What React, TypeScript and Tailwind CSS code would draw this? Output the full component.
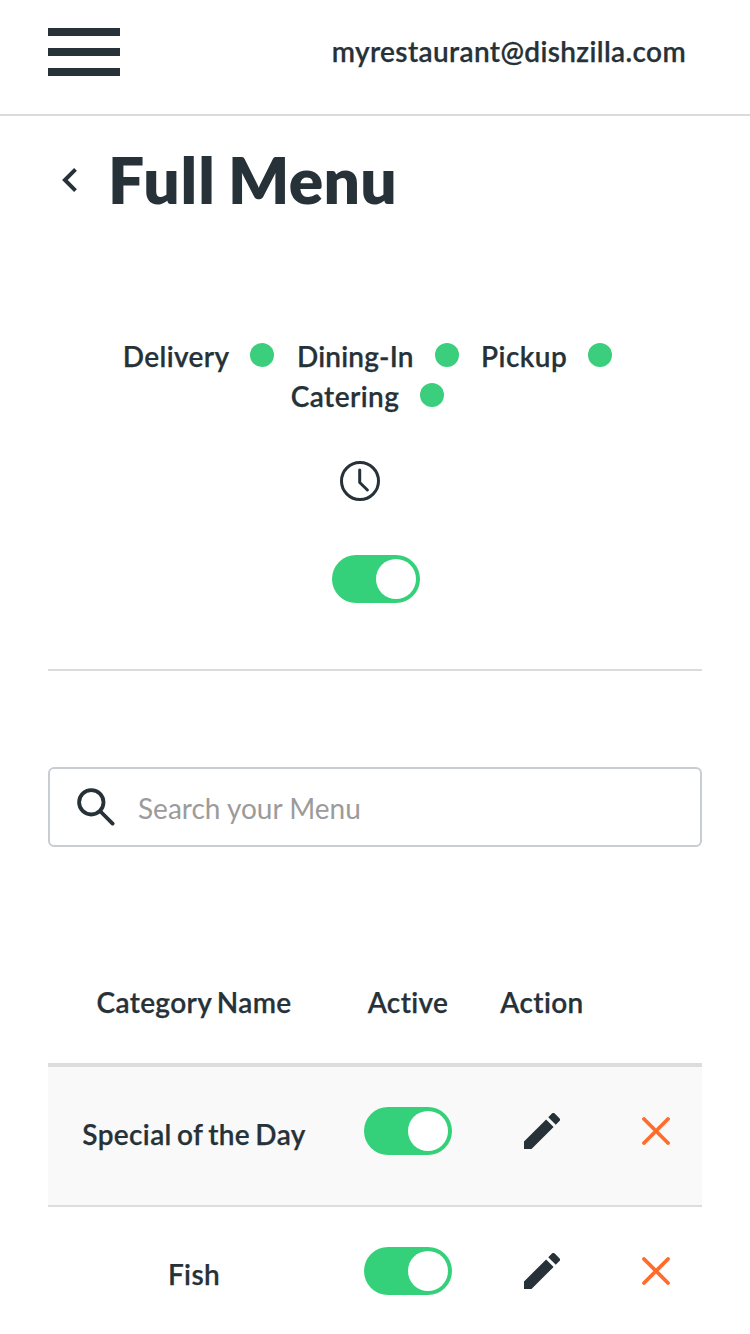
import React from "react";

const services = [
  { name: "Delivery", spacing: "tracking-[0.36px]" },
  { name: "Dining-In", spacing: "tracking-[0.18px]" },
  { name: "Pickup", spacing: "tracking-[0.42px]" },
  { name: "Catering", spacing: "tracking-[0.42px]" },
];
const categories = ["Special of the Day", "Fish"];

function Toggle() {
  return (
    <button
      type="button"
      role="switch"
      aria-checked="true"
      className="flex h-12 w-[88px] items-center justify-end rounded-full bg-[#35d07a] pr-1"
    >
      <span className="size-10 rounded-full bg-white" />
    </button>
  );
}

function PencilIcon() {
  return (
    <svg viewBox="3 3 18 18" className="size-9" fill="currentColor">
      <path d="M3 17.25V21h3.75L17.81 9.94l-3.75-3.75L3 17.25zM20.71 7.04a1 1 0 0 0 0-1.41l-2.34-2.34a1 1 0 0 0-1.41 0l-1.83 1.83 3.75 3.75 1.83-1.83z" />
    </svg>
  );
}

function CloseIcon() {
  return (
    <svg viewBox="0 0 28 28" className="size-7 text-[#ff6c2c]" fill="none" stroke="currentColor" strokeWidth="3.8" strokeLinecap="round">
      <path d="M2 2l24 24M26 2L2 26" />
    </svg>
  );
}

export default function App() {
  return (
    <div className="flex h-[1334px] w-[750px] flex-col overflow-hidden bg-white font-['Lato',sans-serif] text-[28px] leading-10 font-semibold tracking-[0.36px] text-[#263238] [-webkit-text-stroke:0.25px_#263238] [font-variant-ligatures:no-common-ligatures] [word-spacing:-2px]">
      <header className="flex h-[116px] shrink-0 items-start justify-between border-b-2 border-[#dbdbdb] pr-16 pl-12">
        <button type="button" aria-label="Menu" className="mt-7 flex w-[72px] flex-col gap-3">
          <span className="h-2 bg-[#263238]" />
          <span className="h-2 bg-[#263238]" />
          <span className="h-2 bg-[#263238]" />
        </button>
        <span className="mt-[31px]">myrestaurant@dishzilla.com</span>
      </header>

      <main className="flex flex-col px-12">
        <div className="flex h-32 items-center gap-[31px] pl-3.5">
          <svg viewBox="8 6 7.41 12" className="h-6 w-[15px]" fill="currentColor">
            <path d="M15.41 7.41L14 6l-6 6 6 6 1.41-1.41L10.83 12z" />
          </svg>
          <h1 className="-mt-px text-[64px] leading-[80px] font-extrabold tracking-[0.3px] [-webkit-text-stroke:0px] [word-spacing:-3px]">
            <span className="tracking-[1px]">Full</span> Menu
          </h1>
        </div>

        <section className="flex h-[427px] flex-col items-center border-b-2 border-[#dbdbdb] pt-[92px]">
          <div className="flex w-[560px] flex-wrap justify-center gap-x-[22.5px] pr-[15px]">
            {services.map(({ name, spacing }) => (
              <div key={name} className="flex h-10 gap-[21px]">
                <span className={spacing}>{name}</span>
                <span className="mt-[7px] size-6 rounded-full bg-[#3bce7c]" />
              </div>
            ))}
          </div>
          <svg viewBox="0 0 40 40" className="mt-[45px] mr-[30px] size-10" fill="none" stroke="currentColor" strokeWidth="3">
            <circle cx="20" cy="20" r="18.5" />
            <path d="M19.7 9v12.5l7.7 7.5" strokeLinecap="round" strokeLinejoin="round" />
          </svg>
          <div className="mt-[54px] ml-0.5">
            <Toggle />
          </div>
        </section>

        <label className="mt-24 flex h-20 items-center rounded-md border-2 border-[#c8cdd1] pl-[27px]">
          <svg viewBox="0 0 38 38" className="size-[38px] shrink-0" fill="none" stroke="currentColor" strokeWidth="3.8">
            <circle cx="14.3" cy="14.3" r="12.2" />
            <path d="M23 23l12.6 12.6" strokeLinecap="round" />
          </svg>
          <input
            placeholder="Search your Menu"
            className="mt-0.5 ml-[23px] min-w-0 flex-1 font-normal tracking-normal [-webkit-text-stroke:0px] [word-spacing:0px] outline-none placeholder:text-[#9b9b9b]"
          />
        </label>

        <div className="mt-[100px] flex flex-col">
          <div className="grid h-[120px] grid-cols-[292px_136px_132px_94px] items-center border-b-4 border-[#dddddd] pb-1.5 text-center">
            <span>Category Name</span>
            <span>Active</span>
            <span>Action</span>
          </div>
          {categories.map((name) => (
            <div
              key={name}
              className="grid h-[140px] grid-cols-[292px_136px_132px_94px] items-start justify-items-center border-b-2 border-[#dddddd] pt-10 odd:bg-white even:bg-[#f9f9f9]"
            >
              <span className="mt-[7px]">{name}</span>
              <Toggle />
              <span className="mt-1.5"><PencilIcon /></span>
              <span className="mt-2.5 ml-0.5"><CloseIcon /></span>
            </div>
          ))}
        </div>
      </main>
    </div>
  );
}
